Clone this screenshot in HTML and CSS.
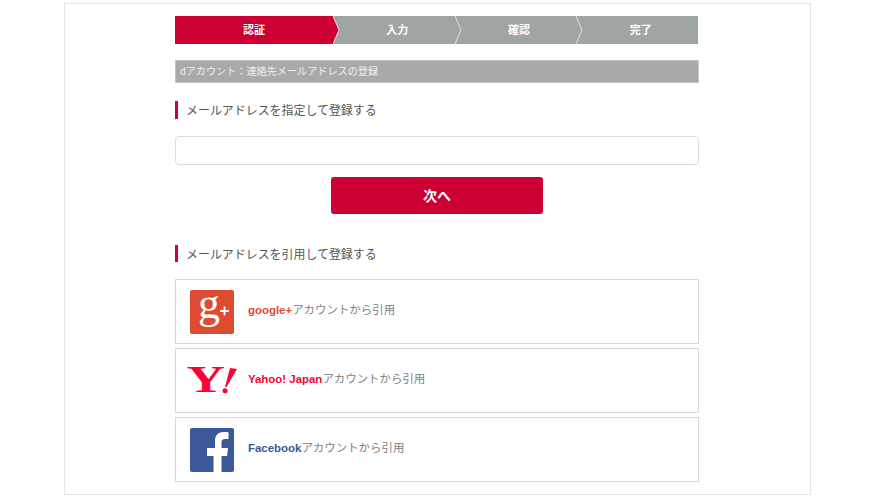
FILE: index.html
```html
<!DOCTYPE html>
<html lang="ja">

<head>
    <meta charset="UTF-8">
    <title>dアカウント</title>
    <link rel="stylesheet" href="styles.css">
</head>

<body>
    <div class="page">
        <div class="steps">
            <div class="step step-first">認証</div>
            <svg class="chevron" viewBox="0 0 7 28"><path d="M0 0 L6 14 L0 28 Z" fill="#cc0033"/><path d="M0 0 L6 14 L0 28" fill="none" stroke="#dfe2e1" stroke-width="1"/></svg>
            <div class="step">入力</div>
            <svg class="chevron" viewBox="0 0 7 28"><path d="M0 0 L6 14 L0 28" fill="none" stroke="#dfe2e1" stroke-width="1"/></svg>
            <div class="step">確認</div>
            <svg class="chevron" viewBox="0 0 7 28"><path d="M0 0 L6 14 L0 28" fill="none" stroke="#dfe2e1" stroke-width="1"/></svg>
            <div class="step">完了</div>
        </div>

        <h1 class="page-title">dアカウント：連絡先メールアドレスの登録</h1>

        <h2 class="section-title">メールアドレスを指定して登録する</h2>
        <input type="text" class="mail-input">
        <button class="next-btn">次へ</button>

        <h2 class="section-title section-second">メールアドレスを引用して登録する</h2>

        <a class="account">
            <svg class="logo" viewBox="0 0 44 44">
                <rect width="44" height="44" rx="2" fill="#dd4b30"/>
                <text x="8" y="28" class="logo-g">g</text>
                <path d="M30 21h9M34.500 16.500v9" stroke="#fff" stroke-width="1.800" fill="none"/>
            </svg>
            <span class="account-text"><b class="google">google+</b>アカウントから引用</span>
        </a>
        <a class="account">
            <svg class="logo" viewBox="0 0 44 44">
                <text class="logo-y" transform="translate(-3.500 32.700) scale(1.400 1)">Y</text>
                <path d="M40 9 L47 10 L36.500 28 L35 28 Z" fill="#ff0033"/>
                <circle cx="35" cy="31.700" r="2.500" fill="#ff0033"/>
            </svg>
            <span class="account-text"><b class="yahoo">Yahoo! Japan</b>アカウントから引用</span>
        </a>
        <a class="account">
            <svg class="logo" viewBox="0 0 44 44">
                <rect width="44" height="44" rx="2" fill="#3b5998"/>
                <path d="M31.500 44V28h5.600l.9-8h-6.500v-5c0-2.300.7-3.900 4-3.900h3V4.200c-.6-.1-2.600-.3-5-.3-5 0-8.500 3.100-8.500 8.800v7.300H17v8h6.500v16z" fill="#fff"/>
            </svg>
            <span class="account-text"><b class="facebook">Facebook</b>アカウントから引用</span>
        </a>
    </div>
</body>

</html>
```

FILE: styles.css
```css
* {
    margin: 0px;
    padding: 0px;
    box-sizing: border-box;
}

body {
    font-family: "Liberation Sans", "Noto Sans CJK JP", sans-serif;
    background: #fff;
    color: #555;
}

.page {
    width: 747px;
    height: 492px;
    margin: 3px 0 0 64px;
    padding: 12px 111px 0 110px;
    border: 1px solid #e4e4e4;
}

.steps {
    display: flex;
    height: 28px;
    margin-right: 1px;
    background: #9ea5a3;
}

.step {
    flex: 1;
    color: #fff;
    font-size: 11px;
    font-weight: bold;
    line-height: 28px;
    text-align: center;
}

.step-first {
    flex: none;
    width: 158px;
    background: #cc0033;
}

.chevron {
    flex: none;
    width: 7px;
    height: 28px;
}

.page-title {
    height: 23px;
    margin-top: 16px;
    padding-left: 4px;
    background: #a9a9a9;
    border: 1px solid #c4c4c4;
    color: #f0f0f0;
    font-size: 10.150px;
    font-weight: normal;
    line-height: 21px;
}

.section-title {
    height: 18px;
    margin-top: 18px;
    padding-left: 8px;
    border-left: 3px solid #cc0033;
    font-size: 11.950px;
    font-weight: normal;
    line-height: 20px;
}

.section-second {
    height: 17px;
    margin-top: 31px;
    margin-bottom: 17px;
}

.mail-input {
    display: block;
    width: 524px;
    height: 29px;
    margin-top: 17px;
    border: 1px solid #dcdcdc;
    border-radius: 4px;
    outline: none;
}

.next-btn {
    display: block;
    width: 212px;
    height: 37px;
    margin: 12px 0 0 156px;
    padding-bottom: 2px;
    background: #cc0033;
    border: none;
    border-radius: 3px;
    color: #fff;
    font-family: inherit;
    font-size: 14px;
    font-weight: bold;
}

.account {
    display: flex;
    align-items: center;
    width: 524px;
    height: 65px;
    margin-bottom: 4px;
    padding-left: 14px;
    border: 1px solid #d8d8d8;
    color: #808080;
}

.logo {
    flex: none;
    width: 44px;
    height: 44px;
    margin-right: 14px;
    overflow: visible;
}

.logo-g {
    fill: #fff;
    font-family: "Liberation Serif", serif;
    font-size: 44px;
}

.logo-y {
    fill: #ff0033;
    font-family: "Liberation Serif", serif;
    font-size: 38px;
    font-weight: bold;
}

.account-text {
    margin-bottom: 6px;
    font-size: 11.450px;
}

.google {
    color: #dd4b39;
}

.yahoo {
    color: #ff0033;
}

.facebook {
    color: #3b5998;
}
```
